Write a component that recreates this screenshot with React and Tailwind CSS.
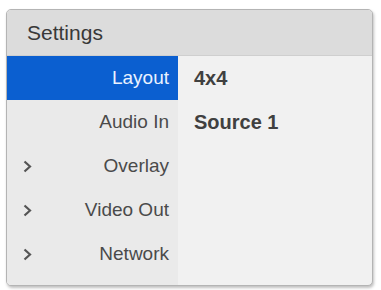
const items = [
  { label: 'Layout', value: '4x4', active: true },
  { label: 'Audio In', value: 'Source 1' },
  { label: 'Overlay', arrow: true },
  { label: 'Video Out', arrow: true },
  { label: 'Network', arrow: true },
];

function Chevron() {
  return (
    <svg width="9" height="13" viewBox="0 0 9 13" className="text-[#555]">
      <polyline points="1.5,1.5 7,6.5 1.5,11.5" fill="none" stroke="currentColor" strokeWidth="2.2" />
    </svg>
  );
}

export default function App() {
  return (
    <div className="w-[381px] h-[290px] bg-white pt-[9px] pl-[6px]" style={{ fontFamily: 'Helvetica, "Liberation Sans", Arial, sans-serif' }}>
      <div className="w-[367px] h-[277px] rounded-[5px] border border-[#b4b4b4] shadow-[1px_2px_3px_rgba(0,0,0,0.25)] overflow-hidden flex flex-col bg-[#f1f1f1]">
        <div className="h-[46px] shrink-0 bg-[#dcdcdc] flex items-center pl-[20px] text-[21px] text-[#383838] border-b border-[#cfcfcf]">
          Settings
        </div>
        <div className="flex flex-1">
          <div className="w-[171px] bg-[#eaeaea] flex flex-col">
            {items.map((it) => (
              <div
                key={it.label}
                className={`h-[44px] flex items-center pr-[9px] pl-[16px] text-[19px] ${
                  it.active ? 'bg-[#0b5fd0] text-[#eaf2ff]' : 'text-[#4a4a4a]'
                }`}
              >
                {it.arrow && <Chevron />}
                <span className="ml-auto">{it.label}</span>
              </div>
            ))}
          </div>
          <div className="flex-1 flex flex-col pl-[16px]">
            {items.map((it) => (
              <div key={it.label} className="h-[44px] flex items-center text-[20px] font-bold text-[#404040]">
                {it.value}
              </div>
            ))}
          </div>
        </div>
      </div>
    </div>
  );
}
